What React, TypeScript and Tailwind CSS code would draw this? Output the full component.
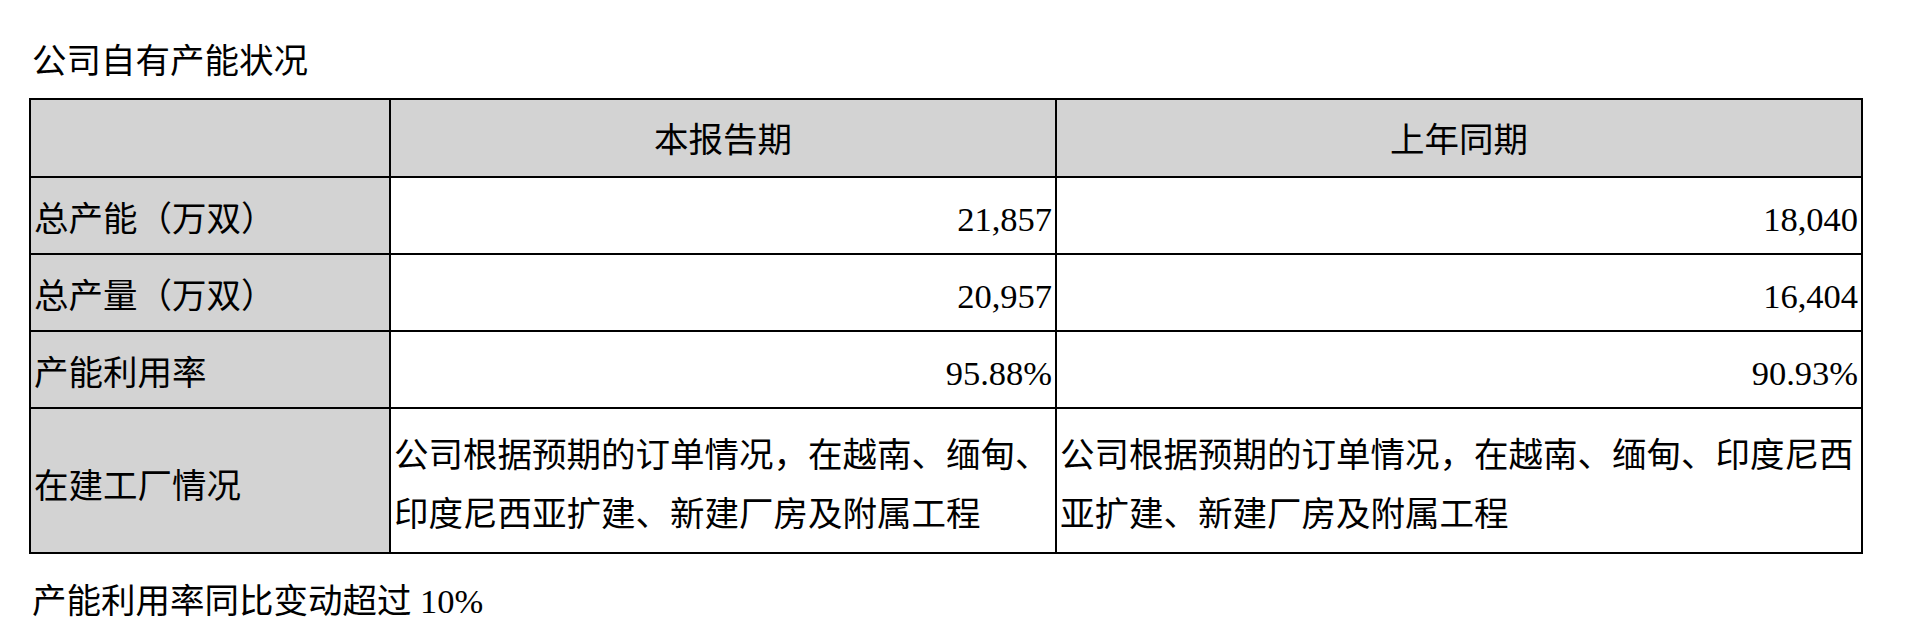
const rows = [
  { label: '总产能（万双）', cur: '21,857', prev: '18,040' },
  { label: '总产量（万双）', cur: '20,957', prev: '16,404' },
  { label: '产能利用率', cur: '95.88%', prev: '90.93%' },
];

const note = '公司根据预期的订单情况，在越南、缅甸、印度尼西亚扩建、新建厂房及附属工程';

export default function App() {
  return (
    <div className="w-[1920px] h-[633px] bg-white text-black pl-[29px] pt-[32px] font-['Liberation_Serif','Noto_Sans_CJK_SC',serif] text-[34.5px] leading-[58px]">
      {/* 标题 */}
      <div className="pl-[3px] mb-[8px]">公司自有产能状况</div>

      <table className="table-fixed border-collapse border-2 border-black w-[1832px]">
        <colgroup>
          <col className="w-[360px]" />
          <col className="w-[666px]" />
          <col className="w-[806px]" />
        </colgroup>
        <thead>
          <tr className="h-[78px] bg-[#d3d3d3]">
            <th className="border-2 border-black font-normal"></th>
            <th className="border-2 border-black font-normal text-center pt-[4px]">本报告期</th>
            <th className="border-2 border-black font-normal text-center pt-[4px]">上年同期</th>
          </tr>
        </thead>
        <tbody>
          {rows.map((r) => (
            <tr key={r.label} className="h-[77px]">
              <td className="border-2 border-black bg-[#d3d3d3] px-[3px] pt-[6px] text-left">{r.label}</td>
              <td className="border-2 border-black px-[3px] pt-[6px] text-right">{r.cur}</td>
              <td className="border-2 border-black px-[3px] pt-[6px] text-right">{r.prev}</td>
            </tr>
          ))}
          <tr className="h-[145px]">
            <td className="border-2 border-black bg-[#d3d3d3] px-[3px] pt-[10px] text-left">在建工厂情况</td>
            <td className="border-2 border-black px-[3px] pt-[16px] pb-[8px] leading-[59px] text-left align-middle">{note}</td>
            <td className="border-2 border-black px-[3px] pt-[16px] pb-[8px] leading-[59px] text-left align-middle">{note}</td>
          </tr>
        </tbody>
      </table>

      <div className="pl-[3px] mt-[18px]">产能利用率同比变动超过 10%</div>
    </div>
  );
}
